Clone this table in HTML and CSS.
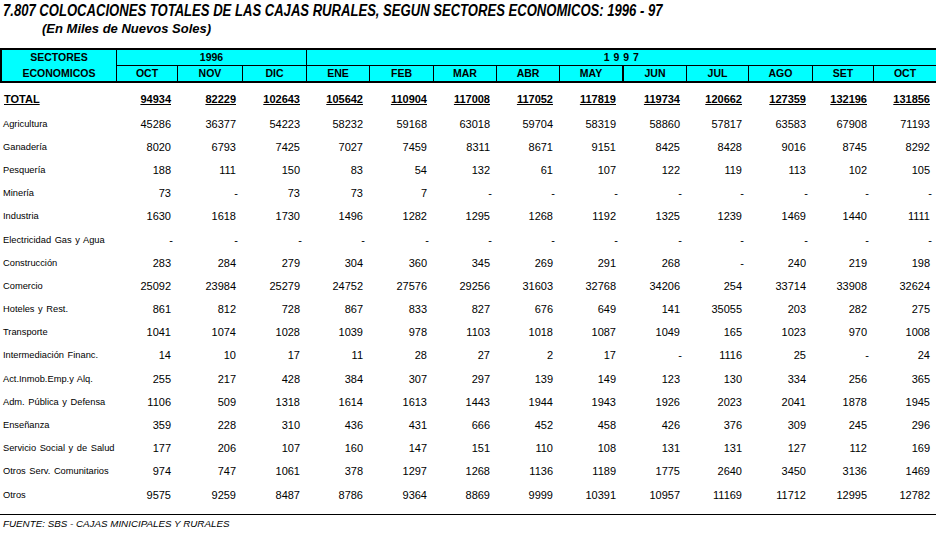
FILE: index.html
```html
<!DOCTYPE html>
<html lang="es">
<head>
<meta charset="utf-8">
<title>7.807 Colocaciones totales de las cajas rurales</title>
<link rel="stylesheet" href="styles.css">
</head>
<body>
<main class="page">
  <header class="heading">
    <h1 class="title">7.807 COLOCACIONES TOTALES DE LAS CAJAS RURALES, SEGUN SECTORES ECONOMICOS: 1996 - 97</h1>
    <p class="subtitle">(En Miles de Nuevos Soles)</p>
  </header>

  <div class="thead">
    <div class="h-sector">SECTORES<br>ECONOMICOS</div>
    <div class="h-year y96">1996</div>
    <div class="h-year y97">1 9 9 7</div>
    <div class="h-month">OCT</div>
    <div class="h-month">NOV</div>
    <div class="h-month">DIC</div>
    <div class="h-month">ENE</div>
    <div class="h-month">FEB</div>
    <div class="h-month">MAR</div>
    <div class="h-month">ABR</div>
    <div class="h-month">MAY</div>
    <div class="h-month thick">JUN</div>
    <div class="h-month">JUL</div>
    <div class="h-month">AGO</div>
    <div class="h-month">SET</div>
    <div class="h-month">OCT</div>
  </div>

  <div class="tbody">
    <div class="row total">
      <span class="label">TOTAL</span>
      <span class="num">94934</span><span class="num">82229</span><span class="num">102643</span><span class="num">105642</span><span class="num">110904</span><span class="num">117008</span><span class="num">117052</span><span class="num">117819</span><span class="num">119734</span><span class="num">120662</span><span class="num">127359</span><span class="num">132196</span><span class="num">131856</span>
    </div>
    <div class="row">
      <span class="label">Agricultura</span>
      <span class="num">45286</span><span class="num">36377</span><span class="num">54223</span><span class="num">58232</span><span class="num">59168</span><span class="num">63018</span><span class="num">59704</span><span class="num">58319</span><span class="num">58860</span><span class="num">57817</span><span class="num">63583</span><span class="num">67908</span><span class="num">71193</span>
    </div>
    <div class="row">
      <span class="label">Ganadería</span>
      <span class="num">8020</span><span class="num">6793</span><span class="num">7425</span><span class="num">7027</span><span class="num">7459</span><span class="num">8311</span><span class="num">8671</span><span class="num">9151</span><span class="num">8425</span><span class="num">8428</span><span class="num">9016</span><span class="num">8745</span><span class="num">8292</span>
    </div>
    <div class="row">
      <span class="label">Pesquería</span>
      <span class="num">188</span><span class="num">111</span><span class="num">150</span><span class="num">83</span><span class="num">54</span><span class="num">132</span><span class="num">61</span><span class="num">107</span><span class="num">122</span><span class="num">119</span><span class="num">113</span><span class="num">102</span><span class="num">105</span>
    </div>
    <div class="row">
      <span class="label">Minería</span>
      <span class="num">73</span><span class="num dash">-</span><span class="num">73</span><span class="num">73</span><span class="num">7</span><span class="num dash">-</span><span class="num dash">-</span><span class="num dash">-</span><span class="num dash">-</span><span class="num dash">-</span><span class="num dash">-</span><span class="num dash">-</span><span class="num dash">-</span>
    </div>
    <div class="row">
      <span class="label">Industria</span>
      <span class="num">1630</span><span class="num">1618</span><span class="num">1730</span><span class="num">1496</span><span class="num">1282</span><span class="num">1295</span><span class="num">1268</span><span class="num">1192</span><span class="num">1325</span><span class="num">1239</span><span class="num">1469</span><span class="num">1440</span><span class="num">1111</span>
    </div>
    <div class="row">
      <span class="label">Electricidad Gas y Agua</span>
      <span class="num dash">-</span><span class="num dash">-</span><span class="num dash">-</span><span class="num dash">-</span><span class="num dash">-</span><span class="num dash">-</span><span class="num dash">-</span><span class="num dash">-</span><span class="num dash">-</span><span class="num dash">-</span><span class="num dash">-</span><span class="num dash">-</span><span class="num dash">-</span>
    </div>
    <div class="row">
      <span class="label">Construcción</span>
      <span class="num">283</span><span class="num">284</span><span class="num">279</span><span class="num">304</span><span class="num">360</span><span class="num">345</span><span class="num">269</span><span class="num">291</span><span class="num">268</span><span class="num dash">-</span><span class="num">240</span><span class="num">219</span><span class="num">198</span>
    </div>
    <div class="row">
      <span class="label">Comercio</span>
      <span class="num">25092</span><span class="num">23984</span><span class="num">25279</span><span class="num">24752</span><span class="num">27576</span><span class="num">29256</span><span class="num">31603</span><span class="num">32768</span><span class="num">34206</span><span class="num">254</span><span class="num">33714</span><span class="num">33908</span><span class="num">32624</span>
    </div>
    <div class="row">
      <span class="label">Hoteles y Rest.</span>
      <span class="num">861</span><span class="num">812</span><span class="num">728</span><span class="num">867</span><span class="num">833</span><span class="num">827</span><span class="num">676</span><span class="num">649</span><span class="num">141</span><span class="num">35055</span><span class="num">203</span><span class="num">282</span><span class="num">275</span>
    </div>
    <div class="row">
      <span class="label">Transporte</span>
      <span class="num">1041</span><span class="num">1074</span><span class="num">1028</span><span class="num">1039</span><span class="num">978</span><span class="num">1103</span><span class="num">1018</span><span class="num">1087</span><span class="num">1049</span><span class="num">165</span><span class="num">1023</span><span class="num">970</span><span class="num">1008</span>
    </div>
    <div class="row">
      <span class="label">Intermediación Financ.</span>
      <span class="num">14</span><span class="num">10</span><span class="num">17</span><span class="num">11</span><span class="num">28</span><span class="num">27</span><span class="num">2</span><span class="num">17</span><span class="num dash">-</span><span class="num">1116</span><span class="num">25</span><span class="num dash">-</span><span class="num">24</span>
    </div>
    <div class="row">
      <span class="label">Act.Inmob.Emp.y Alq.</span>
      <span class="num">255</span><span class="num">217</span><span class="num">428</span><span class="num">384</span><span class="num">307</span><span class="num">297</span><span class="num">139</span><span class="num">149</span><span class="num">123</span><span class="num">130</span><span class="num">334</span><span class="num">256</span><span class="num">365</span>
    </div>
    <div class="row">
      <span class="label">Adm. Pública y Defensa</span>
      <span class="num">1106</span><span class="num">509</span><span class="num">1318</span><span class="num">1614</span><span class="num">1613</span><span class="num">1443</span><span class="num">1944</span><span class="num">1943</span><span class="num">1926</span><span class="num">2023</span><span class="num">2041</span><span class="num">1878</span><span class="num">1945</span>
    </div>
    <div class="row">
      <span class="label">Enseñanza</span>
      <span class="num">359</span><span class="num">228</span><span class="num">310</span><span class="num">436</span><span class="num">431</span><span class="num">666</span><span class="num">452</span><span class="num">458</span><span class="num">426</span><span class="num">376</span><span class="num">309</span><span class="num">245</span><span class="num">296</span>
    </div>
    <div class="row">
      <span class="label">Servicio Social y de Salud</span>
      <span class="num">177</span><span class="num">206</span><span class="num">107</span><span class="num">160</span><span class="num">147</span><span class="num">151</span><span class="num">110</span><span class="num">108</span><span class="num">131</span><span class="num">131</span><span class="num">127</span><span class="num">112</span><span class="num">169</span>
    </div>
    <div class="row">
      <span class="label">Otros Serv. Comunitarios</span>
      <span class="num">974</span><span class="num">747</span><span class="num">1061</span><span class="num">378</span><span class="num">1297</span><span class="num">1268</span><span class="num">1136</span><span class="num">1189</span><span class="num">1775</span><span class="num">2640</span><span class="num">3450</span><span class="num">3136</span><span class="num">1469</span>
    </div>
    <div class="row">
      <span class="label">Otros</span>
      <span class="num">9575</span><span class="num">9259</span><span class="num">8487</span><span class="num">8786</span><span class="num">9364</span><span class="num">8869</span><span class="num">9999</span><span class="num">10391</span><span class="num">10957</span><span class="num">11169</span><span class="num">11712</span><span class="num">12995</span><span class="num">12782</span>
    </div>
  </div>

  <footer class="source">FUENTE: SBS - CAJAS MINICIPALES Y RURALES</footer>
</main>
</body>
</html>
```

FILE: styles.css
```css
* {
  box-sizing: border-box;
}

html, body {
  margin: 0;
  padding: 0;
  background: #ffffff;
}

body {
  font-family: "Liberation Sans", Arial, sans-serif;
  color: #000000;
}

.page {
  width: 936px;
}

.heading {
  padding-left: 3px;
}

.title {
  margin: 0;
  padding-top: 2px;
  font-size: 16px;
  line-height: 18px;
  font-weight: 700;
  font-style: italic;
  white-space: nowrap;
  transform: scaleX(0.817);
  transform-origin: left center;
}

.subtitle {
  margin: 0;
  padding-left: 39px;
  font-size: 13px;
  line-height: 17px;
  font-weight: 700;
  font-style: italic;
}

.thead {
  margin-top: 11px;
  width: 936px;
  display: grid;
  grid-template-columns: 114px 61px 65px 64px 63px 64px 63px 63px 63px 64px 62px 64px 61px 63px;
  grid-template-rows: 16px 15px;
  background: #00ffff;
  border-top: 2px solid #000;
  border-left: 2px solid #000;
  border-bottom: 2px solid #000;
  font-size: 10.5px;
  font-weight: 700;
  text-align: center;
}

.h-sector {
  grid-row: 1 / span 2;
  grid-column: 1;
  margin-top: -1px;
  line-height: 16px;
}

.h-year {
  grid-row: 1;
  border-left: 1px solid #000;
  border-bottom: 1px solid #000;
  line-height: 15px;
}

.y96 {
  grid-column: 2 / span 3;
}

.y97 {
  grid-column: 5 / span 10;
  letter-spacing: 0.5px;
}

.h-month {
  grid-row: 2;
  border-left: 1px solid #000;
  line-height: 15px;
}

.h-month.thick {
  border-left-width: 2px;
}

.tbody {
  margin-top: 3px;
}

.row {
  display: grid;
  grid-template-columns: 116px 61px 65px 64px 63px 64px 63px 63px 63px 64px 62px 64px 61px 63px;
  height: 23.2px;
  align-items: center;
}

.row.total {
  height: 26px;
}

.label {
  padding-left: 3px;
  font-size: 9.3px;
  word-spacing: 1px;
  white-space: nowrap;
}

.num {
  padding-right: 6px;
  text-align: right;
  font-size: 11px;
}

.num.dash {
  padding-right: 4px;
}

.total .label,
.total .num {
  font-size: 11px;
  font-weight: 700;
  text-decoration: underline;
}

.total .label {
  padding-left: 4px;
}

.source {
  margin-top: 7.6px;
  padding-top: 3px;
  padding-left: 3px;
  border-top: 1px solid #000;
  font-size: 9.8px;
  line-height: 12px;
  font-style: italic;
}
```
